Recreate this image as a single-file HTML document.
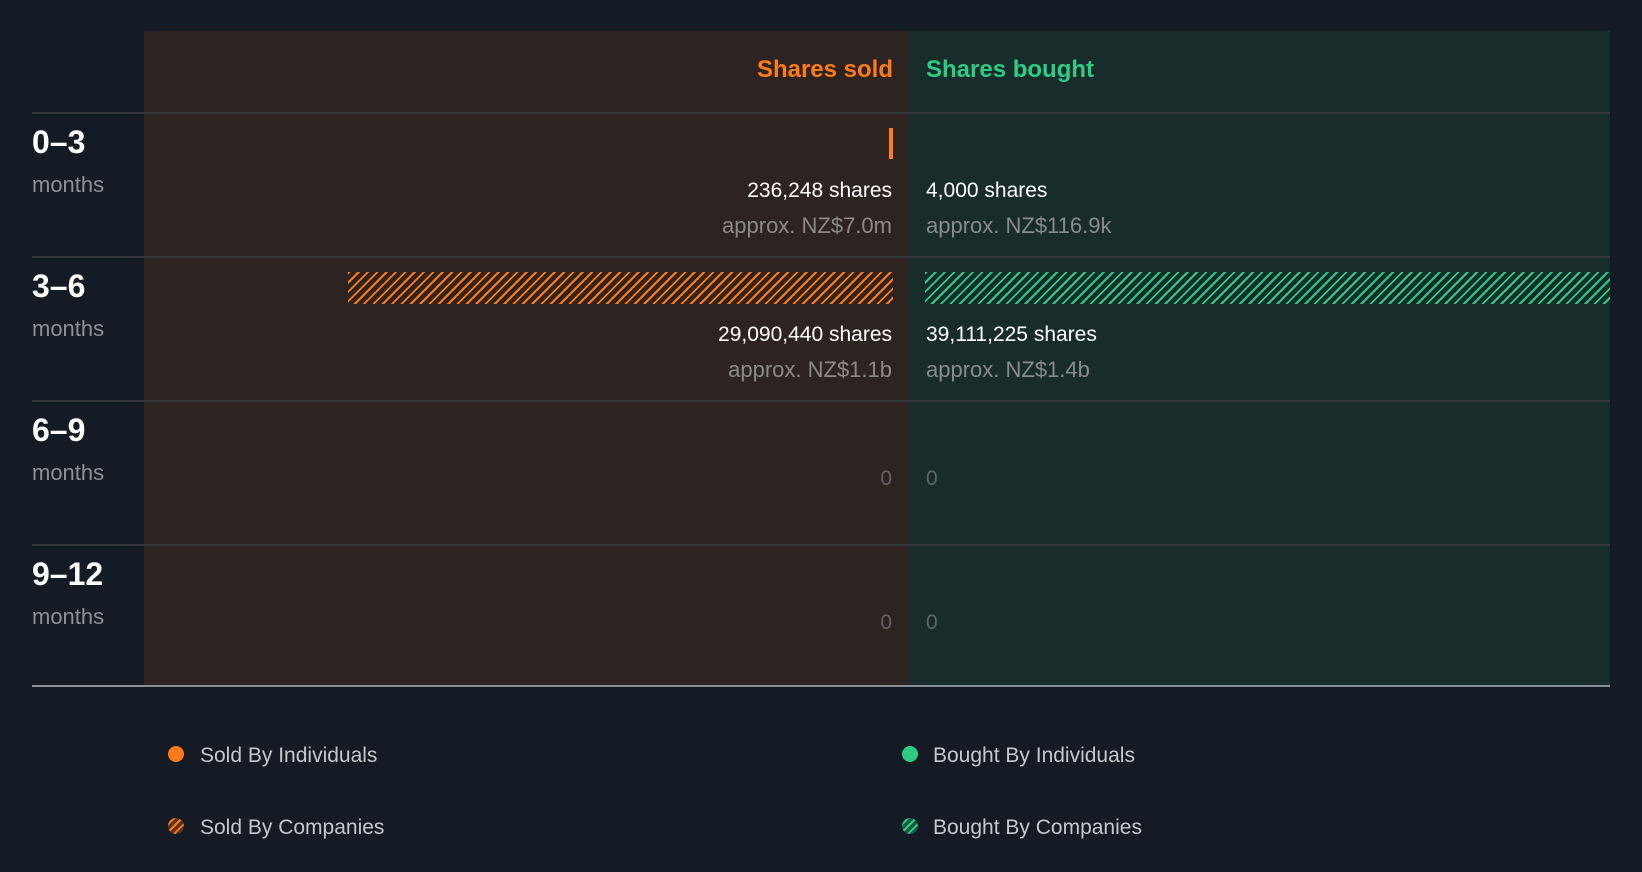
<!DOCTYPE html>
<html><head><meta charset="utf-8"><style>
*{margin:0;padding:0;box-sizing:border-box}
body{width:1642px;height:872px;background:#151b24;font-family:"Liberation Sans",sans-serif;position:relative;overflow:hidden}
.a{position:absolute}
.sold{left:144px;top:31px;width:765px;height:655px;background:#2d2422}
.bought{left:909px;top:31px;width:701px;height:655px;background:#182c2c}
.line{left:32px;width:1578px;height:2px;background:#34363a}
.lab{left:32px;font-weight:bold;font-size:32px;color:#fff;line-height:1}
.mon{left:32px;font-size:22px;color:#8c9096;line-height:1}
.r{right:750px;text-align:right;white-space:nowrap;line-height:1}
.l{left:926px;white-space:nowrap;line-height:1}
.sh{font-size:21px;color:#fff}
.ap{font-size:22px;color:#8a8a8a}
.z{font-size:21px;color:#5f6366}
.hs{background:repeating-linear-gradient(135deg,#ff7a1a 0 2px,transparent 2px 6.6px)}
.hb{background:repeating-linear-gradient(135deg,#2ecc82 0 2px,transparent 2px 6.6px)}
.lg{font-size:21px;color:#c4c7cc;line-height:1}
.dot{width:16px;height:16px;border-radius:50%}
</style></head><body>
<div class="a sold"></div><div class="a bought"></div>
<div class="a" style="right:749px;top:58px;font-size:24px;font-weight:bold;color:#ff7a1a;line-height:1">Shares sold</div>
<div class="a" style="left:926px;top:58px;font-size:24px;font-weight:bold;color:#2ecc82;line-height:1">Shares bought</div>
<div class="a line" style="top:112px"></div>
<div class="a line" style="top:256px"></div>
<div class="a line" style="top:400px"></div>
<div class="a line" style="top:544px"></div>
<div class="a" style="left:32px;top:685px;width:1578px;height:2px;background:#8a9096"></div>

<div class="a lab" style="top:126px">0–3</div><div class="a mon" style="top:174px">months</div>
<div class="a lab" style="top:270px">3–6</div><div class="a mon" style="top:318px">months</div>
<div class="a lab" style="top:414px">6–9</div><div class="a mon" style="top:462px">months</div>
<div class="a lab" style="top:558px">9–12</div><div class="a mon" style="top:606px">months</div>

<div class="a" style="left:889px;top:128px;width:4px;height:31px;background:#ff7a1a"></div>
<div class="a r sh" style="top:180px">236,248 shares</div>
<div class="a r ap" style="top:215px">approx. NZ$7.0m</div>
<div class="a l sh" style="top:180px">4,000 shares</div>
<div class="a l ap" style="top:215px">approx. NZ$116.9k</div>

<div class="a hs" style="left:348px;top:272px;width:545px;height:32px"></div>
<div class="a hb" style="left:925px;top:272px;width:685px;height:32px"></div>
<div class="a r sh" style="top:324px">29,090,440 shares</div>
<div class="a r ap" style="top:359px">approx. NZ$1.1b</div>
<div class="a l sh" style="top:324px">39,111,225 shares</div>
<div class="a l ap" style="top:359px">approx. NZ$1.4b</div>

<div class="a r z" style="top:468px">0</div><div class="a l z" style="top:468px">0</div>
<div class="a r z" style="top:612px">0</div><div class="a l z" style="top:612px">0</div>

<div class="a dot" style="left:168px;top:746px;background:#ff7a1a"></div>
<div class="a lg" style="left:200px;top:745px">Sold By Individuals</div>
<div class="a dot" style="left:168px;top:818px;background:repeating-linear-gradient(135deg,#5a3620 0 3.5px,#ff7a1a 3.5px 5.5px)"></div>
<div class="a lg" style="left:200px;top:817px">Sold By Companies</div>
<div class="a dot" style="left:902px;top:746px;background:#2ecc82"></div>
<div class="a lg" style="left:933px;top:745px">Bought By Individuals</div>
<div class="a dot" style="left:902px;top:818px;background:repeating-linear-gradient(135deg,#1d5a45 0 3.5px,#2ecc82 3.5px 5.5px)"></div>
<div class="a lg" style="left:933px;top:817px">Bought By Companies</div>
</body></html>
